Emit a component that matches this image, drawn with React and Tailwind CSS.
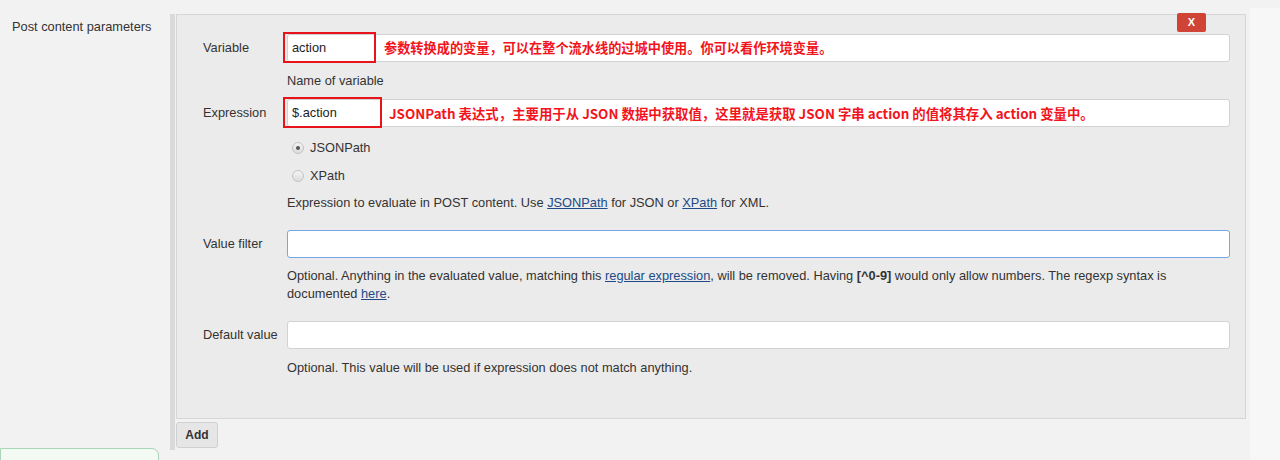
import React from "react";

const font = { fontFamily: '"Liberation Sans", Arial, sans-serif' };
const cjk = { fontFamily: '"Noto Sans CJK SC", "Noto Sans", sans-serif' };

function Radio({ checked, label }) {
  return (
    <div className="flex items-center h-[18px] pl-[5px]">
      <span className="w-[12px] h-[12px] rounded-full border border-[#c4c4c4] bg-gradient-to-b from-[#f4f4f4] to-[#dcdcdc] flex items-center justify-center">
        {checked && <span className="w-[4px] h-[4px] rounded-full bg-[#555]" />}
      </span>
      <span className="ml-[6px] text-[12.8px] text-[#333]">{label}</span>
    </div>
  );
}

function Row({ label, children, className = "" }) {
  return (
    <div className={"flex " + className}>
      <div className="w-[84px] shrink-0 h-[28px] flex items-center text-[12.8px] text-[#333] pb-[1px]">{label}</div>
      <div className="flex-1 min-w-0">{children}</div>
    </div>
  );
}

function Input({ value = "", focus = false, children }) {
  return (
    <div className="relative">
      <div
        className={
          "h-[28px] bg-white rounded-[3px] border flex items-center pl-[4px] text-[12.8px] text-[#222] " +
          (focus ? "border-[#74a7e4]" : "border-[#d2d2d2]")
        }
      >
        {value}
      </div>
      {children}
    </div>
  );
}

export default function App() {
  return (
    <div className="w-[1280px] h-[460px] bg-[#f2f2f2] relative overflow-hidden" style={font}>
      <div className="flex h-full">
        <div className="w-[170px] shrink-0 pl-[12px] pt-[17px] text-[12.8px] text-[#333] relative">
          Post content parameters
        </div>
        <div className="w-[1080px] shrink-0 pt-[14px] flex flex-col">
          <div className="border-l-[5px] border-[#dadada] h-[436px] pl-[1px]">
            <div className="relative bg-[#ebebeb] border border-[#d6d6d6] h-[405px] pl-[26px] pr-[15px] pt-[19px] w-[1070px]">
              <div className="absolute right-[39px] top-[-2px] w-[29px] h-[19px] bg-[#d04437] rounded-[2px] flex items-center justify-center text-white text-[11px] font-bold">
                X
              </div>

              <Row label="Variable">
                <Input value="action">
                  <div className="absolute left-[-4px] top-[-2px] w-[93px] h-[31px] border-2 border-[#e8141b]" />
                  <div className="absolute left-[97px] top-0 h-[28px] flex items-center text-[13.2px] font-bold text-[#f2141c]" style={cjk}>
                    参数转换成的变量，可以在整个流水线的过城中使用。你可以看作环境变量。
                  </div>
                </Input>
              </Row>
              <div className="ml-[84px] mt-[10px] h-[18px] leading-[18px] text-[12.8px] text-[#333]">Name of variable</div>

              <Row label="Expression" className="mt-[9px]">
                <Input value="$.action">
                  <div className="absolute left-[-4px] top-[-2px] w-[99px] h-[31px] border-2 border-[#e8141b]" />
                  <div className="absolute left-[102px] top-0 h-[28px] flex items-center text-[13.4px] font-bold text-[#f2141c]" style={cjk}>
                    JSONPath 表达式，主要用于从 JSON 数据中获取值，这里就是获取 JSON 字串 action 的值将其存入 action 变量中。
                  </div>
                </Input>
              </Row>
              <div className="ml-[84px] mt-[12px]">
                <Radio checked label="JSONPath" />
                <div className="mt-[10px]">
                  <Radio label="XPath" />
                </div>
                <div className="mt-[9px] h-[18px] leading-[18px] text-[12.8px] text-[#333]">
                  Expression to evaluate in POST content. Use{" "}
                  <a className="text-[#204a87] underline">JSONPath</a> for JSON or{" "}
                  <a className="text-[#204a87] underline">XPath</a> for XML.
                </div>
              </div>

              <Row label="Value filter" className="mt-[18px]">
                <Input focus />
              </Row>
              <div className="ml-[84px] mt-[9px] leading-[18px] text-[12.8px] text-[#333] pr-[10px]">
                Optional. Anything in the evaluated value, matching this{" "}
                <a className="text-[#204a87] underline">regular expression</a>, will be removed. Having{" "}
                <b>[^0-9]</b> would only allow numbers. The regexp syntax is documented{" "}
                <a className="text-[#204a87] underline">here</a>.
              </div>

              <Row label="Default value" className="mt-[18px]">
                <Input />
              </Row>
              <div className="ml-[84px] mt-[10px] h-[18px] leading-[18px] text-[12.8px] text-[#333]">
                Optional. This value will be used if expression does not match anything.
              </div>
            </div>
            <button className="mt-[3px] w-[42px] h-[26px] bg-[#e6e6e6] border border-[#d0d0d0] rounded-[3px] text-[12px] font-bold text-[#333]">
              Add
            </button>
          </div>
        </div>
        <div className="flex-1 mt-[8px] bg-[#f7f7f7]" />
      </div>
      <div className="absolute left-0 top-[448px] w-[159px] h-[20px] bg-[#f3f9f3] border border-[#a9d6b9] rounded-tr-[7px]" />
    </div>
  );
}
